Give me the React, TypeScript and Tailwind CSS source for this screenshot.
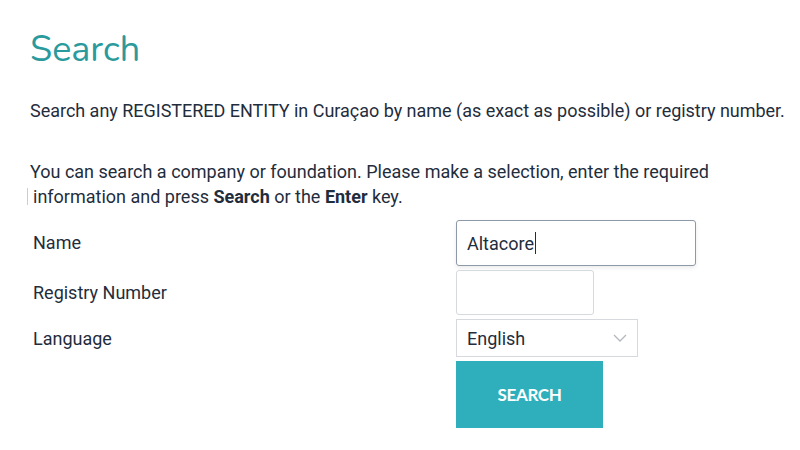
export default function App() {
  return (
    <div className="min-h-[450px] w-[800px] bg-white pl-[30px] pt-[29px] font-['Roboto',sans-serif] text-[#1f2d3d]">
      <h1 className="font-['Nunito','Lato',sans-serif] text-[36px] leading-[42px] font-normal text-[#2a9a9c]">Search</h1>
      <p className="mt-[27px] text-[18px] leading-[26px] tracking-[-0.02px]">
        Search any REGISTERED ENTITY in Curaçao by name (as exact as possible) or registry number.
      </p>
      <div className="mt-[35px] text-[18px] leading-[25px]">
        <div>You can search a company or foundation. Please make a selection, enter the required</div>
        <div className="relative pl-[3px]">
          <span className="absolute left-[-3px] top-[4px] h-[17px] w-px bg-[#c9ced6]" />
          information and press <b className="font-bold">Search</b> or the <b className="font-bold">Enter</b> key.
        </div>
      </div>
      <div className="mt-[11px] grid grid-cols-[423px_1fr] pl-[3px] text-[18px]">
        <div className="flex h-[45px] items-center">Name</div>
        <div>
          <div className="flex h-[46px] w-[240px] items-center rounded-[3px] border border-[#8d99a8] px-[10px] shadow-[0_2px_4px_rgba(0,0,0,0.08)]">
            Altacore<span className="ml-px inline-block h-[22px] w-px bg-[#1f2d3d]" />
          </div>
        </div>
        <div className="mt-[4px] flex h-[45px] items-center">Registry Number</div>
        <div className="mt-[4px]">
          <div className="h-[45px] w-[138px] rounded-[3px] border border-[#d6d9de]" />
        </div>
        <div className="mt-[4px] flex h-[38px] items-center">Language</div>
        <div className="mt-[4px]">
          <div className="flex h-[38px] w-[182px] items-center justify-between border border-[#d6d9de] pl-[10px] pr-[10px]">
            <span>English</span>
            <svg width="14" height="8" viewBox="0 0 14 8" fill="none" stroke="#b3b8bf" strokeWidth="1.3">
              <path d="M1 1l6 6 6-6" />
            </svg>
          </div>
        </div>
        <div />
        <div className="mt-[4px]">
          <button className="h-[67px] w-[147px] bg-[#2eafbb] font-['Lato',sans-serif] text-[17px] font-bold tracking-[-0.3px] text-white">
            SEARCH
          </button>
        </div>
      </div>
    </div>
  );
}
